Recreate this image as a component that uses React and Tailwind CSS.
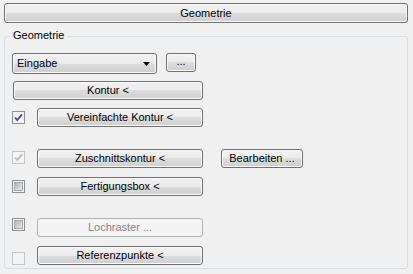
import React from 'react';

const face =
  'flex items-center h-[19px] rounded-[3px] border border-[#707070] bg-[linear-gradient(#f2f2f2_0%,#ebebeb_50%,#dddddd_50%,#cfcfcf_100%)] shadow-[inset_0_0_0_1px_#fbfbfb] text-black';
const btn = `${face} justify-center`;
const btnDisabled =
  'flex items-center justify-center h-[19px] rounded-[3px] border border-[#adb2b5] bg-[#f4f4f4] text-[#838383]';

const Check = ({ color }) => (
  <svg width="9" height="9" viewBox="0 0 9 9">
    <path d="M1 4.5 L3.2 7 L8 1.3" fill="none" stroke={color} strokeWidth="1.8" />
  </svg>
);

const CheckBox = ({ checked, disabled, offset }) => {
  if (disabled) {
    return (
      <div className={`w-[13px] h-[13px] border border-[#c5c5c5] bg-[#f4f4f4] flex items-center justify-center ${offset}`}>
        {checked && <Check color="#bdbdbd" />}
      </div>
    );
  }
  return (
    <div className={`w-[13px] h-[13px] border border-[#8e8f8f] p-[1px] bg-[#f4f4f4] ${offset}`}>
      <div
        className={`w-full h-full flex items-center justify-center ${
          checked
            ? 'bg-[linear-gradient(135deg,#e8e9ea,#ffffff)]'
            : 'bg-[linear-gradient(135deg,#b0b3b8,#e9eaeb)] border border-[#a6a9ad]'
        }`}
      >
        {checked && <Check color="#3d54a0" />}
      </div>
    </div>
  );
};

const Row = ({ mt, box, boxOffset, label, disabled, children }) => (
  <div className={`flex items-start ${mt}`}>
    <CheckBox checked={box.checked} disabled={box.disabled} offset={boxOffset} />
    <div className={`ml-[12px] w-[166px] ${disabled ? btnDisabled : btn}`}>{label}</div>
    {children}
  </div>
);

export default function App() {
  return (
    <div
      className="w-[413px] h-[274px] bg-[#f0f0f0] pt-[3px] pl-[4px] pr-[5px] text-[11px] leading-[13px] text-black"
      style={{ fontFamily: '"Liberation Sans", Arial, sans-serif' }}
    >
      <div className={`${btn} h-[20px] w-full`}>Geometrie</div>

      <div className="relative mt-[13px] h-[233px] rounded-[3px] border border-[#d5dfe5] pl-[7px] pt-[16px]">
        <span className="absolute -top-[8px] left-[5px] bg-[#f0f0f0] px-[3px]">Geometrie</span>

        <div className="flex items-start">
          <div className={`${face} h-[21px] w-[145px] justify-between pl-[4px] pr-[6px]`}>
            <span>Eingabe</span>
            <svg width="7" height="4" viewBox="0 0 7 4">
              <path d="M0 0 H7 L3.5 4 Z" fill="#000" />
            </svg>
          </div>
          <div className={`${btn} ml-[9px] w-[30px] pb-[2px]`}>...</div>
        </div>

        <div className={`${btn} mt-[7px] ml-[1px] w-[190px]`}>Kontur &lt;</div>

        <Row mt="mt-[8px]" box={{ checked: true }} boxOffset="mt-[3px]" label="Vereinfachte Kontur <" />

        <Row mt="mt-[22px]" box={{ checked: true, disabled: true }} boxOffset="mt-[2px]" label="Zuschnittskontur <">
          <div className={`${btn} ml-[18px] w-[82px]`}>Bearbeiten ...</div>
        </Row>

        <Row mt="mt-[9px]" box={{ checked: false }} boxOffset="mt-[3px]" label="Fertigungsbox <" />

        <Row mt="mt-[22px]" box={{ checked: false }} boxOffset="mt-0" label="Lochraster ..." disabled />

        <Row mt="mt-[9px]" box={{ checked: false, disabled: true }} boxOffset="mt-[6px]" label="Referenzpunkte <" />
      </div>
    </div>
  );
}
